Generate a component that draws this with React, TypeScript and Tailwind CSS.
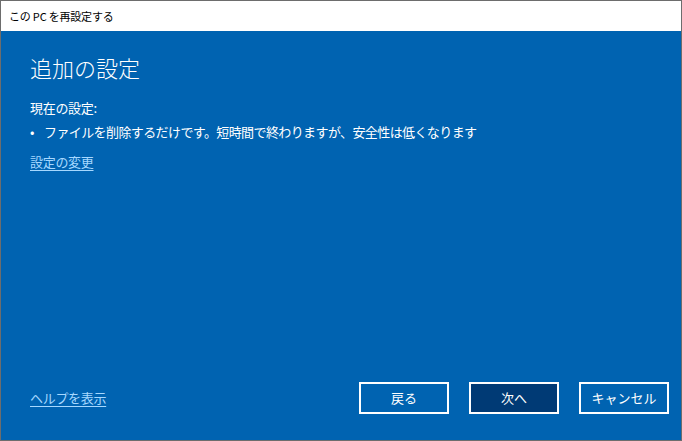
import React from 'react';

const font = { fontFamily: '"Noto Sans CJK JP", "Noto Sans", sans-serif' };

export default function App() {
    return (
        <div className="w-[682px] h-[441px] bg-[#6d6d6d] p-px pt-0 flex flex-col" style={font}>
            {/* Title bar */}
            <div className="h-[31px] bg-white flex items-center pl-[8px] text-[11px] tracking-[-0.2px] text-black shrink-0 border-t border-[#6d6d6d]">
                この PC を再設定する
            </div>

            {/* Body */}
            <div className="flex-1 bg-[#0063b1] flex flex-col px-[29px] text-white">
                <h1 className="mt-[20px] text-[22px] leading-[32px] font-light">追加の設定</h1>
                <div className="mt-[15px] text-[13px] leading-[20px] tracking-[-0.3px]">現在の設定:</div>
                <div className="mt-[4px] text-[13px] leading-[20px] tracking-[-0.6px] flex">
                    <span className="w-[14px]">•</span>
                    <span>ファイルを削除するだけです。短時間で終わりますが、安全性は低くなります</span>
                </div>
                <a className="mt-[10px] text-[13px] leading-[20px] tracking-[-0.3px] text-[#a6d8ff] underline underline-offset-[3px] w-fit">設定の変更</a>

                <div className="mt-auto mb-[26px] flex items-center">
                    <a className="text-[13px] leading-[20px] tracking-[-0.3px] text-[#a6d8ff] underline underline-offset-[3px]">ヘルプを表示</a>
                    <div className="ml-auto mr-[-17px] flex gap-[20px]">
                        <button className="w-[90px] h-[32px] border-2 border-white text-[13px] text-white">戻る</button>
                        <button className="w-[90px] h-[32px] border-2 border-white bg-[#003a75] text-[13px] text-white">次へ</button>
                        <button className="w-[90px] h-[32px] border-2 border-white text-[13px] text-white">キャンセル</button>
                    </div>
                </div>
            </div>
        </div>
    );
}
